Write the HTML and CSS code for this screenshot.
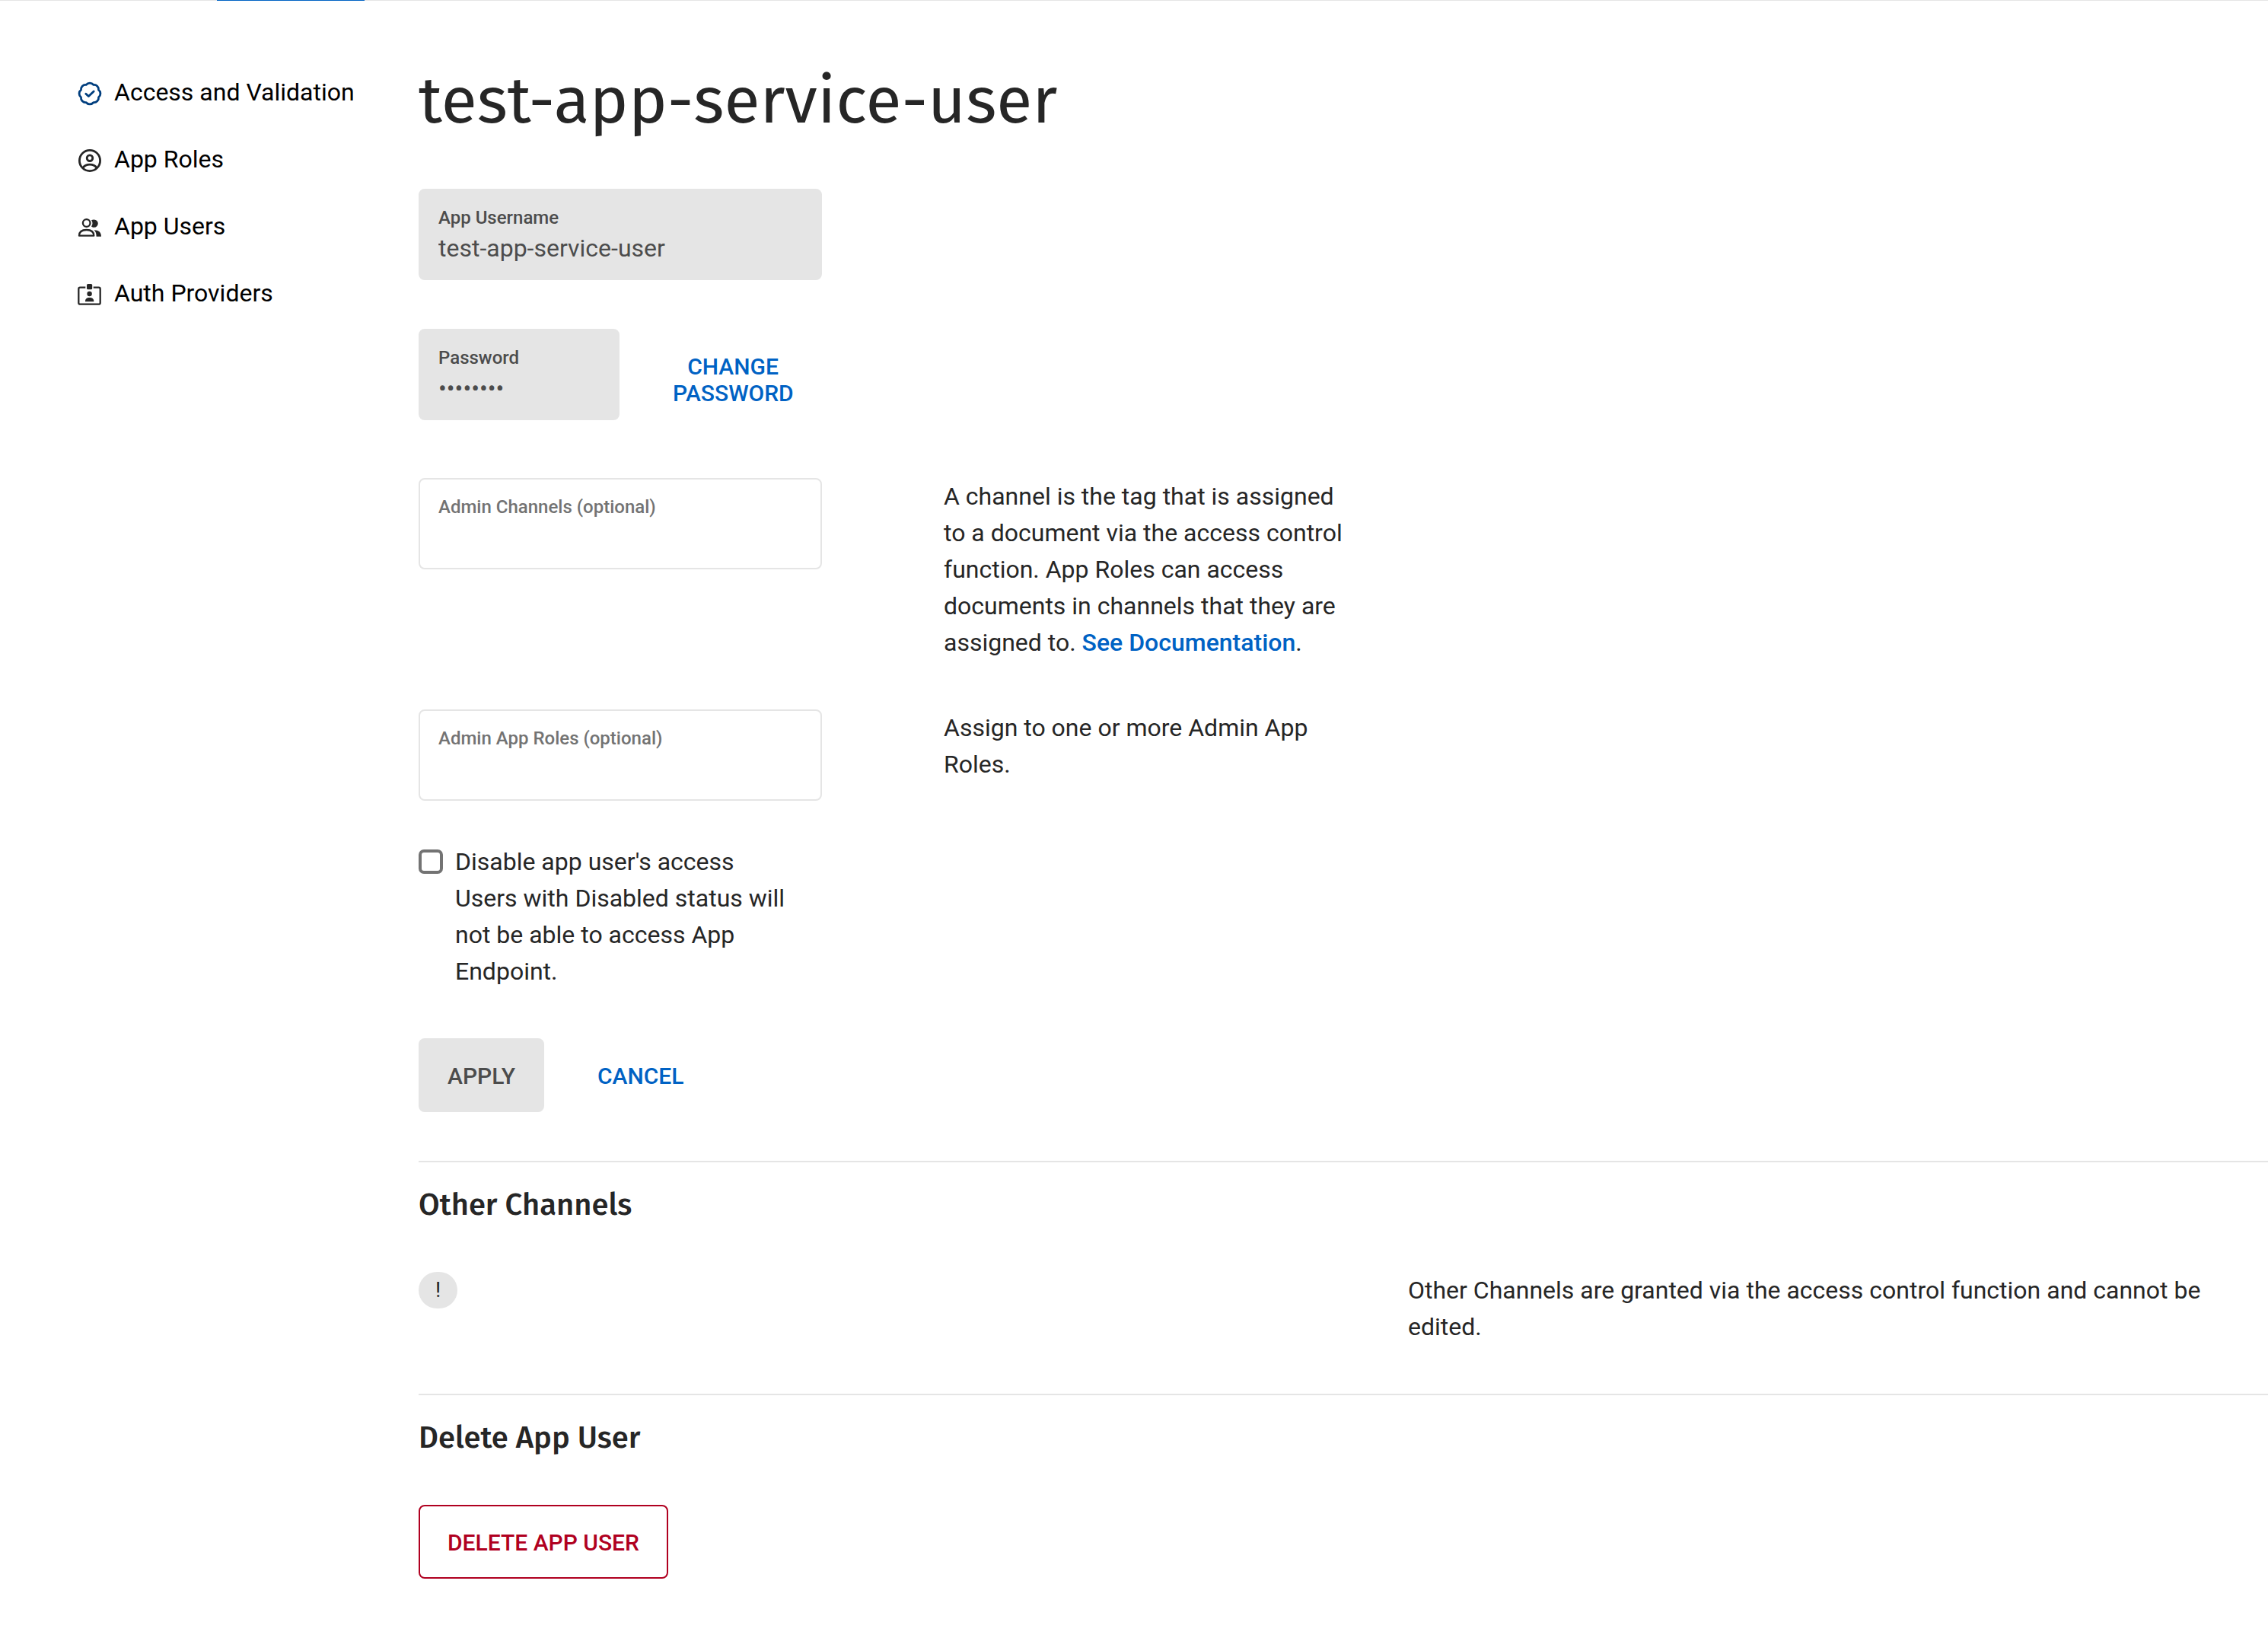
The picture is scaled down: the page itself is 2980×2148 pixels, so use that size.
FILE: index.html
```html
<!DOCTYPE html>
<html lang="en">
<head>
<meta charset="utf-8">
<title>test-app-service-user</title>
<link rel="stylesheet" href="styles.css">
</head>
<body>
<div class="tabline"><div class="tabline-active"></div></div>
<div class="layout">
  <nav class="sidebar">
    <a class="nav-item" href="#access">
      <svg class="nav-icon nav-icon-active" viewBox="0 0 32 36" aria-hidden="true"><g fill="none" stroke="currentColor" stroke-width="2.8" stroke-linejoin="round" stroke-linecap="round"><path d="M27.55 24.78A6 6 0 0 1 20.78 31.55A6 6 0 0 1 11.22 31.55A6 6 0 0 1 4.45 24.78A6 6 0 0 1 4.45 15.22A6 6 0 0 1 11.22 8.45A6 6 0 0 1 20.78 8.45A6 6 0 0 1 27.55 15.22A6 6 0 0 1 27.55 24.78Z"/><path d="M10.8 20.2L14.4 23.6L21.2 17"/></g></svg>
      Access and Validation
    </a>
    <a class="nav-item" href="#roles">
      <svg class="nav-icon" viewBox="0 0 32 36" aria-hidden="true"><g fill="none" stroke="currentColor" stroke-width="2.8"><circle cx="16" cy="20" r="13.6"/><circle cx="16" cy="16.7" r="3.8"/><path d="M6.8 29.6C9 26.4 12.5 25.2 16 25.2S23 26.4 25.2 29.6"/></g></svg>
      App Roles
    </a>
    <a class="nav-item" href="#users">
      <svg class="nav-icon" viewBox="0 0 32 36" aria-hidden="true"><g fill="none" stroke="currentColor" stroke-width="2.3"><circle cx="11.7" cy="14" r="4.8"/><path stroke-linejoin="round" d="M2 30.7C2 25.5 6 23 11.7 23S21.3 25.5 21.3 30.7Z"/></g><path fill="currentColor" d="M18 10.2C19 9.7 20.2 9.4 21.6 9.4A5.2 5.2 0 0 1 21.6 19.8C20.2 19.8 19 19.5 18 18.6C20 16 20 12.6 18 10.2Z"/><path fill="currentColor" d="M21.5 23.3C27.5 23.3 31 26 31 31.7H24.6C24.6 27.5 23.6 25 21.5 23.3Z"/></svg>
      App Users
    </a>
    <a class="nav-item" href="#providers">
      <svg class="nav-icon" viewBox="0 0 32 36" aria-hidden="true"><path fill="none" stroke="currentColor" stroke-width="2.3" d="M10.3 10.7H3.3A2 2 0 0 0 1.3 12.7V30.7A2 2 0 0 0 3.3 32.7H27.7A2 2 0 0 0 29.7 30.7V12.7A2 2 0 0 0 27.7 10.7H20.7"/><g fill="currentColor"><rect x="12" y="6" width="7.2" height="7.2" rx="1.5"/><circle cx="15.6" cy="19" r="3.2"/><path d="M10 29.3V28.5C10 25.3 12.6 24 15.6 24S21.3 25.3 21.3 28.5V29.3Z"/></g></svg>
      Auth Providers
    </a>
  </nav>
  <main class="content">
    <h1 class="title">test-app-service-user</h1>
    <form class="form">
      <div class="field field-disabled field-wide">
        <label class="field-label" for="username">App Username</label>
        <input class="field-input" id="username" type="text" value="test-app-service-user" disabled>
      </div>
      <div class="password-row">
        <div class="field field-disabled">
          <label class="field-label" for="password">Password</label>
          <input class="field-input" id="password" type="password" value="password" disabled>
        </div>
        <button class="button button-text" type="button">CHANGE PASSWORD</button>
      </div>
      <div class="form-row">
        <div class="field">
          <label class="field-label" for="channels">Admin Channels (optional)</label>
          <input class="field-input" id="channels" type="text">
        </div>
        <p class="text">A channel is the tag that is assigned to a document via the access control function. App Roles can access documents in channels that they are assigned to. <a class="link" href="#docs">See Documentation</a>.</p>
      </div>
      <div class="form-row">
        <div class="field">
          <label class="field-label" for="roles-input">Admin App Roles (optional)</label>
          <input class="field-input" id="roles-input" type="text">
        </div>
        <p class="text">Assign to one or more Admin App Roles.</p>
      </div>
      <div class="check-row">
        <input class="checkbox" id="disable" type="checkbox">
        <label class="text" for="disable">Disable app user's access<br>Users with Disabled status will not be able to access App Endpoint.</label>
      </div>
      <div class="actions">
        <button class="button button-disabled" type="submit" disabled>APPLY</button>
        <button class="button button-text" type="button">CANCEL</button>
      </div>
    </form>
    <section class="section">
      <h2 class="heading">Other Channels</h2>
      <div class="split">
        <span class="badge">!</span>
        <p class="text">Other Channels are granted via the access control function and cannot be edited.</p>
      </div>
    </section>
    <section class="section">
      <h2 class="heading">Delete App User</h2>
      <button class="button button-danger" type="button">DELETE APP USER</button>
    </section>
  </main>
</div>
</body>
</html>
```
FILE: styles.css
```css
* { box-sizing: border-box; }

body {
  margin: 0;
  background: #fff;
  color: #262626;
  font-family: Roboto, sans-serif;
  font-size: 32px;
  line-height: 48px;
}

h1, h2, p { margin: 0; }

.tabline {
  height: 1px;
  padding-left: 285px;
  background: #e5e5e5;
}

.tabline-active {
  width: 194px;
  height: 1px;
  background: #0062c4;
}

.layout {
  display: grid;
  grid-template-columns: 448px minmax(0, 1fr);
  padding-left: 102px;
}

.sidebar {
  display: flex;
  flex-direction: column;
  gap: 40px;
  padding-top: 96px;
}

.nav-item {
  display: flex;
  align-items: center;
  gap: 16px;
  color: #000;
  text-decoration: none;
  white-space: nowrap;
}

.nav-icon {
  flex: none;
  width: 32px;
  height: 36px;
  color: #262626;
}

.nav-icon-active { color: #003e7e; }

.content { padding: 79px 0 72px; }

.title {
  margin-bottom: 62px;
  font: 400 86px/106px "Fira Sans", "Noto Sans", sans-serif;
}

.form {
  display: flex;
  flex-direction: column;
  gap: 64px;
  padding-bottom: 64px;
}

.form-row {
  display: grid;
  grid-template-columns: 530px 530px;
  align-items: start;
  gap: 160px;
}

.field {
  display: flex;
  flex-direction: column;
  height: 120px;
  padding: 20px 24px;
  border: 2px solid #e5e5e5;
  border-radius: 8px;
  color: #737373;
}

.field-wide { width: 530px; }

.field-disabled {
  background: #e5e5e5;
  color: #4c4c4c;
}

.field-label {
  font-size: 24px;
  font-weight: 500;
  line-height: 32px;
}

.field-input {
  width: 100%;
  height: 48px;
  padding: 0;
  border: 0;
  outline: 0;
  background: none;
  color: inherit;
  font: inherit;
}

.password-row {
  display: grid;
  grid-template-columns: 264px 234px;
  align-items: start;
  gap: 32px;
}

.button {
  padding: 30px 36px 28px;
  border: 2px solid transparent;
  border-radius: 8px;
  background: none;
  font: 500 30px/35px Roboto, sans-serif;
}

.button-text { color: #0062c4; }

.button-disabled {
  background: #e5e5e5;
  color: #4c4c4c;
}

.button-danger {
  border-color: #b00020;
  color: #b00020;
}

.check-row {
  display: flex;
  align-items: start;
  gap: 16px;
  width: 530px;
  margin-top: -8px;
}

.checkbox {
  flex: none;
  width: 32px;
  height: 32px;
  margin: 8px 0;
  appearance: none;
  border: 4px solid #737373;
  border-radius: 7px;
}

.checkbox:checked { background: #0062c4; }

.actions {
  display: flex;
  gap: 32px;
}

.link {
  color: #0062c4;
  font-weight: 500;
  text-decoration: none;
}

.section {
  padding: 32px 0 64px;
  border-top: 2px solid #e5e5e5;
}

.heading {
  margin-bottom: 64px;
  font: 500 40px/48px "Fira Sans", "Noto Sans", sans-serif;
}

.split {
  display: grid;
  grid-template-columns: 1fr 1fr;
  align-items: start;
  gap: 170px;
}

.badge {
  justify-self: start;
  width: 51px;
  height: 48px;
  border-radius: 24px;
  background: #e5e5e5;
  font-size: 28px;
  text-align: center;
}
```
